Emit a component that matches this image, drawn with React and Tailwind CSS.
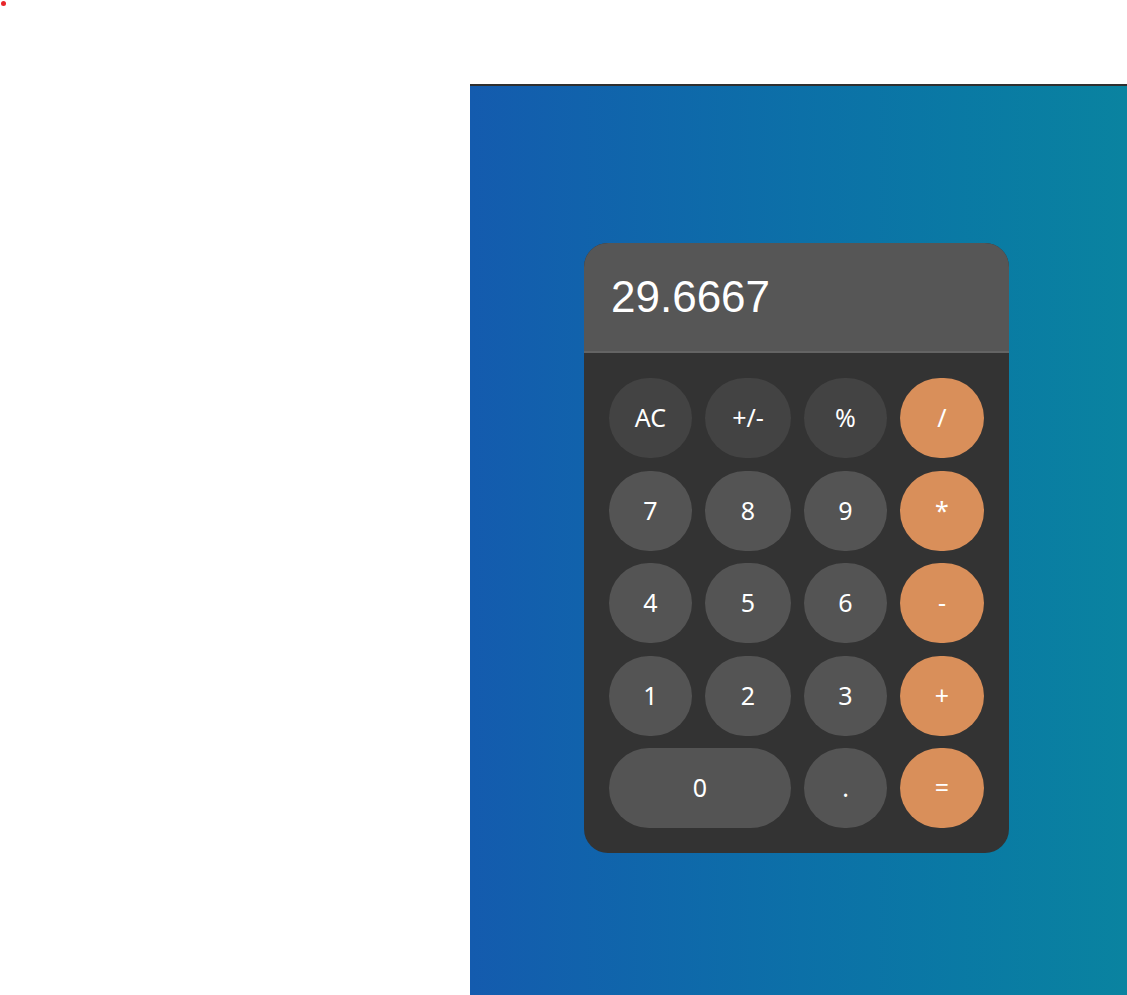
const keys = [
  { label: "AC", kind: "fn" },
  { label: "+/-", kind: "fn" },
  { label: "%", kind: "fn" },
  { label: "/", kind: "op" },
  { label: "7" },
  { label: "8" },
  { label: "9" },
  { label: "*", kind: "op" },
  { label: "4" },
  { label: "5" },
  { label: "6" },
  { label: "-", kind: "op" },
  { label: "1" },
  { label: "2" },
  { label: "3" },
  { label: "+", kind: "op" },
  { label: "0", wide: true },
  { label: "." },
  { label: "=", kind: "op" }
];

const keyColors = {
  fn: "bg-[#434343]",
  op: "bg-[#d98f5a]",
  num: "bg-[#545454]"
};

const Key = ({ label, kind = "num", wide }) => (
  <button
    className={`h-20 rounded-full flex items-center justify-center text-white text-[25px] ${keyColors[kind]} ${wide ? "col-span-2" : ""}`}
    style={{ fontFamily: '"Noto Sans", "Open Sans", sans-serif' }}
  >
    {label}
  </button>
);

export default function App() {
  return (
    <div className="relative w-full h-[995px] bg-white overflow-hidden">
      <span className="absolute left-[1px] top-[1px] w-[5px] h-[5px] rounded-full bg-[#e8252a]" />
      <div className="h-[84px]" />
      <div className="ml-[470px] h-[911px] border-t-2 border-[#2f2f2f] bg-linear-to-r from-[#145bae] to-[#0a83a0] pt-[157px] pl-[114px]">
        <div className="w-[425px] rounded-[24px] overflow-hidden bg-[#333333]">
          <div
            className="h-[110px] bg-[#565656] border-b-2 border-[#646464] flex items-center px-[27px] text-white text-[44px]"
            style={{ fontFamily: '"Liberation Sans", Arial, sans-serif' }}
          >
            29.6667
          </div>
          <div className="p-[25px] grid grid-cols-[83px_86px_83px_84px] gap-x-[13px] gap-y-[12.5px]">
            {keys.map((k) => (
              <Key key={k.label} {...k} />
            ))}
          </div>
        </div>
      </div>
    </div>
  );
}
